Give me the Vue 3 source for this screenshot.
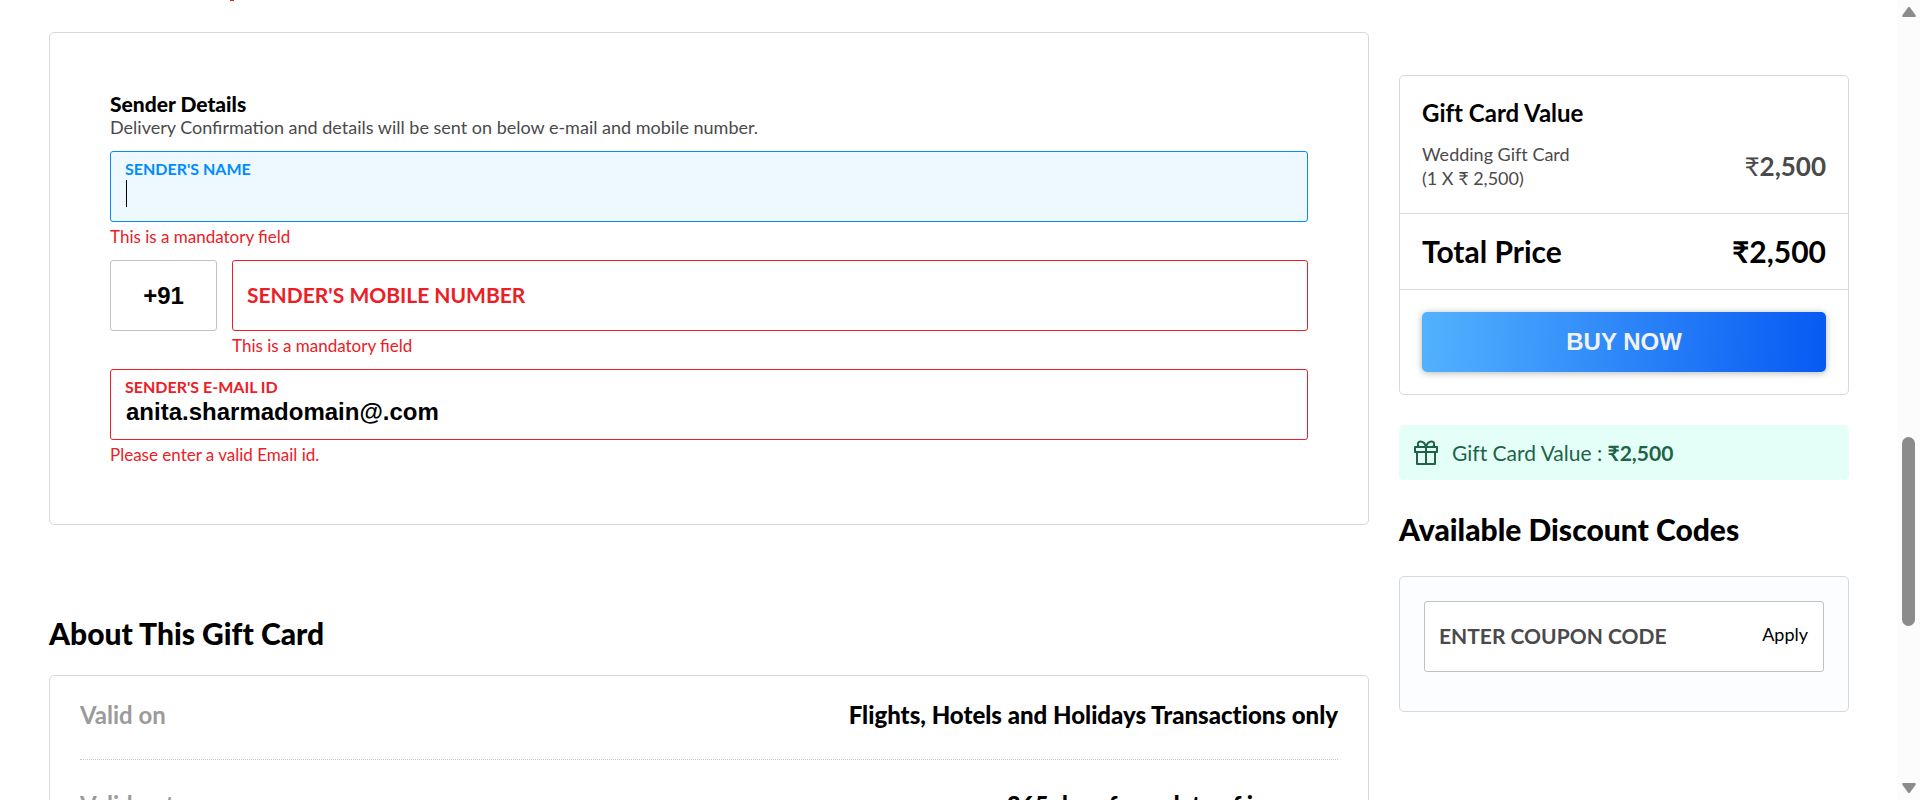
<script setup>
import { ref } from 'vue'

const name = ref('')
const mobile = ref('')
const email = ref('anita.sharmadomain@.com')
const code = ref('+91')
const coupon = ref('')

const facts = [
  { label: 'Valid on', value: 'Flights, Hotels and Holidays Transactions only' },
  { label: 'Valid upto', value: '365 days from date of issuance' },
]
</script>

<template>
  <div class="screen">
    <div class="page">
      <span class="cutoff" aria-hidden="true"></span>
      <div class="container">
        <main class="main">
          <form class="card sender" @submit.prevent>
            <h2 class="sender-title">Sender Details</h2>
            <p class="sender-sub">Delivery Confirmation and details will be sent on below e-mail and mobile number.</p>

            <div class="row">
              <div class="group">
                <div class="field active">
                  <label for="sname">SENDER'S NAME</label>
                  <input id="sname" v-model="name" type="text" autocomplete="off" />
                  <span class="caret" aria-hidden="true"></span>
                </div>
                <p class="error">This is a mandatory field</p>
              </div>
            </div>

            <div class="row">
              <div class="field code">
                <input v-model="code" type="text" aria-label="Country code" />
              </div>
              <div class="group">
                <div class="field invalid">
                  <label class="resting" for="smobile">SENDER'S MOBILE NUMBER</label>
                  <input id="smobile" v-model="mobile" type="tel" />
                </div>
                <p class="error">This is a mandatory field</p>
              </div>
            </div>

            <div class="row">
              <div class="group">
                <div class="field invalid">
                  <label for="semail">SENDER'S E-MAIL ID</label>
                  <input id="semail" v-model="email" type="text" />
                </div>
                <p class="error">Please enter a valid Email id.</p>
              </div>
            </div>
          </form>

          <h2 class="heading about-title">About This Gift Card</h2>
          <dl class="card about">
            <div v-for="f in facts" :key="f.label" class="fact">
              <dt>{{ f.label }}</dt>
              <dd>{{ f.value }}</dd>
            </div>
          </dl>
        </main>

        <aside class="side">
          <section class="card summary">
            <div class="part value">
              <h3>Gift Card Value</h3>
              <div class="line">
                <p class="item">Wedding Gift Card<br />(1 X ₹ 2,500)</p>
                <span class="amount"><span class="currency">₹</span>2,500</span>
              </div>
            </div>
            <div class="part total">
              <span>Total Price</span>
              <span>₹2,500</span>
            </div>
            <div class="part action">
              <button type="button" class="buy">BUY NOW</button>
            </div>
          </section>

          <p class="banner">
            <svg width="24" height="26" viewBox="0 0 24 26" fill="none" stroke="#1f6347" stroke-width="2" stroke-linejoin="round">
              <rect x="1" y="7" width="22" height="5" />
              <path d="M3 12v12h18V12M12 7v17" />
              <path d="M12 7C11 3 9 1.500 6.500 1.500C3.500 1.500 3 5 5 7M12 7C13 3 15 1.500 17.500 1.500C20.500 1.500 21 5 19 7" />
            </svg>
            <span>Gift Card Value : <b>₹2,500</b></span>
          </p>

          <h2 class="heading codes-title">Available Discount Codes</h2>
          <form class="card coupon" @submit.prevent>
            <div class="field">
              <label class="resting" for="coupon">ENTER COUPON CODE</label>
              <input id="coupon" v-model="coupon" type="text" />
              <button type="submit" class="apply">Apply</button>
            </div>
          </form>
        </aside>
      </div>
    </div>

    <div class="scrollbar" aria-hidden="true">
      <svg width="16" height="12" viewBox="0 0 16 12"><path d="M7 1.500Q8 0 9 1.500L14.500 9Q15.500 11 13.500 11H2.500Q0.500 11 1.500 9Z" fill="#8b8b8b" /></svg>
      <span class="thumb"></span>
      <svg class="down" width="16" height="12" viewBox="0 0 16 12"><path d="M7 10.500Q8 12 9 10.500L14.500 3Q15.500 1 13.500 1H2.500Q0.500 1 1.500 3Z" fill="#8b8b8b" /></svg>
    </div>
  </div>
</template>

<style>
body {
  background: #fff;
}
</style>

<style scoped>
* {
  box-sizing: border-box;
}
h2, h3, p, dl, dd {
  margin: 0;
}
.screen {
  display: flex;
  height: 100vh;
  overflow: hidden;
  font-family: Lato, "Liberation Sans", sans-serif;
  color: #000;
}
.page {
  position: relative;
  flex: 1;
  min-width: 0;
  overflow: hidden;
}
.cutoff {
  position: absolute;
  top: 0;
  left: 230px;
  width: 4px;
  height: 1px;
  background: #eb2026;
}
.container {
  display: flex;
  align-items: flex-start;
  gap: 30px;
  padding: 32px 48px 0 49px;
}
.main {
  flex: 1;
  min-width: 0;
}
.side {
  width: 450px;
  padding-top: 43px;
}
.card {
  border: 1px solid #d8d8d8;
  border-radius: 5px;
  background: #fff;
}
.sender {
  padding: 59px 60px 58px;
}
.sender-title {
  font-size: 21px;
  line-height: 24px;
  font-weight: 900;
}
.sender-sub {
  margin-bottom: 13px;
  font-size: 18px;
  line-height: 22px;
  color: #4a4a4a;
}
.row {
  display: flex;
  gap: 15px;
  min-height: 109px;
}
.row:last-child {
  min-height: 0;
}
.group {
  flex: 1;
}
.field {
  position: relative;
  height: 71px;
  border: 1px solid #c2c2c2;
  border-radius: 3px;
  background: #fff;
}
.field input {
  width: 100%;
  height: 100%;
  padding: 14px 15px 0;
  border: 0;
  outline: 0;
  background: transparent;
  font: bold 24px "Liberation Sans", Arial, sans-serif;
  color: #000;
}
.field label {
  position: absolute;
  top: 7px;
  left: 14px;
  font-size: 16px;
  line-height: 20px;
  font-weight: 700;
}
.field label.resting {
  top: 21px;
  font-size: 21px;
  line-height: 26px;
}
.active {
  border-color: #008cff;
  background: #edf9ff;
}
.active label {
  color: #008cff;
}
.invalid {
  border-color: #eb2026;
}
.invalid label,
.error {
  color: #eb2026;
}
.caret {
  position: absolute;
  top: 28px;
  left: 15px;
  width: 1px;
  height: 27px;
  background: #000;
}
.error {
  margin-top: 4px;
  font-size: 17px;
  line-height: 22px;
}
.code {
  width: 107px;
}
.field.code input {
  padding: 0;
  text-align: center;
}
.heading,
.fact,
.summary,
.banner {
  font-variant-ligatures: none;
}
.heading {
  font-size: 30px;
  line-height: 36px;
  font-weight: 900;
}
.about-title {
  margin: 90px 0 24px;
}
.about {
  padding: 0 30px;
}
.fact {
  display: flex;
  justify-content: space-between;
  height: 90px;
  padding-top: 24px;
  border-bottom: 1px dotted #c8c8c8;
  font-size: 24px;
  line-height: 30px;
}
.fact:first-child {
  height: 84px;
}
.fact + .fact {
  padding-top: 30px;
}
dt {
  font-weight: 700;
  color: #9b9b9b;
}
dd {
  font-weight: 900;
}
.part {
  padding: 22px;
}
.part + .part {
  border-top: 1px solid #d8d8d8;
}
.value {
  padding-bottom: 23px;
}
.value h3 {
  margin-bottom: 14px;
  font-size: 24px;
  line-height: 30px;
  font-weight: 700;
}
.line {
  display: flex;
  justify-content: space-between;
  align-items: center;
}
.item {
  font-size: 18px;
  line-height: 24px;
  color: #4a4a4a;
}
.amount {
  font-size: 26px;
  font-weight: 700;
  color: #4a4a4a;
}
.currency {
  font-weight: 400;
}
.part.total {
  display: flex;
  justify-content: space-between;
  padding-top: 19px;
  padding-bottom: 20px;
  font-size: 30px;
  line-height: 36px;
  font-weight: 700;
}
.buy {
  display: block;
  width: 100%;
  height: 60px;
  border: 0;
  border-radius: 5px;
  background: linear-gradient(93deg, #53b2fe, #065af3);
  box-shadow: 0 1px 7px rgba(0, 0, 0, 0.3);
  font: bold 24px "Liberation Sans", Arial, sans-serif;
  color: #f2f2f2;
}
.banner {
  display: flex;
  align-items: center;
  gap: 14px;
  height: 55px;
  margin-top: 30px;
  padding: 0 15px;
  border-radius: 5px;
  background: #e4fff8;
  font-size: 21px;
  line-height: 28px;
  color: #1f6347;
}
.codes-title {
  margin: 31px 0 29px;
}
.coupon {
  padding: 24px 24px 39px;
  background: #fcfdff;
}
.coupon label {
  color: #4a4a4a;
}
.apply {
  position: absolute;
  top: 20px;
  right: 15px;
  padding: 0;
  border: 0;
  background: none;
  font: 18px/24px Lato, sans-serif;
  color: #000;
}
.scrollbar {
  display: flex;
  flex-direction: column;
  align-items: center;
  width: 23px;
  padding: 6px 0;
  background: #fcfcfc;
}
.thumb {
  width: 13px;
  height: 189px;
  margin-top: 419px;
  border-radius: 7px;
  background: #8b8b8b;
}
.down {
  margin-top: auto;
}
</style>
